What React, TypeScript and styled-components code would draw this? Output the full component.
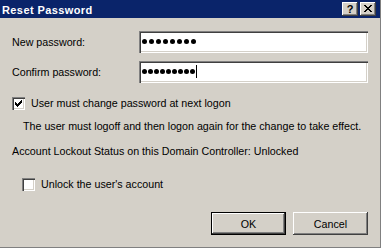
import React from "react";
import styled, { createGlobalStyle, css } from "styled-components";

const Global = createGlobalStyle`
  html, body { margin: 0; padding: 0; background: #d4d0c8; }
  body { font-family: "Liberation Sans", Arial, sans-serif; font-size: 10.7px; color: #000; }
  * { box-sizing: border-box; }
`;

const Window = styled.div`
  width: 381px;
  height: 248px;
  background: #d4d0c8;
  border-right: 1px solid #808080;
  border-bottom: 1px solid #808080;
  display: flex;
  flex-direction: column;
`;

const TitleBar = styled.div`
  height: 18px;
  background: #0a246a;
  display: flex;
  align-items: center;
  justify-content: space-between;
  padding: 0 4px 0 2px;
`;

const TitleText = styled.div`
  color: #fff;
  font-weight: bold;
  font-size: 11px;
  letter-spacing: 0.4px;
  line-height: 18px;
  padding-top: 1px;
`;

const TitleButtons = styled.div`
  display: flex;
  gap: 2px;
`;

const raised = css`
  background: #d4d0c8;
  box-shadow: inset -1px -1px 0 #404040, inset 1px 1px 0 #fff, inset -2px -2px 0 #808080;
`;

const CapButton = styled.div`
  ${raised};
  width: 16px;
  height: 14px;
  display: flex;
  align-items: center;
  justify-content: center;
  font-weight: bold;
  font-size: 11px;
  line-height: 14px;
  padding-bottom: 1px;
`;

const Body = styled.div`
  flex: 1;
  display: flex;
  flex-direction: column;
  padding: 0 12px 0 12px;
`;

const FieldRow = styled.div<{ $top: number }>`
  display: flex;
  align-items: center;
  height: 22px;
  margin-top: ${(p) => p.$top}px;
`;

const Label = styled.div`
  width: 127px;
`;

const PasswordBox = styled.div`
  width: 229px;
  height: 22px;
  background: #fff;
  box-shadow: inset 1px 1px 0 #808080, inset 2px 2px 0 #404040, inset -1px -1px 0 #fff, inset -2px -2px 0 #d4d0c8;
  display: flex;
  align-items: center;
  padding: 0 3px 1px 3px;
`;

const Dots = styled.div<{ $gap: number }>`
  display: flex;
  gap: ${(p) => p.$gap}px;
  align-items: center;
`;

const Dot = styled.span`
  width: 5px;
  height: 5px;
  border-radius: 50%;
  background: #000;
`;

const Caret = styled.span`
  width: 1px;
  height: 13px;
  background: #000;
  margin-left: 1px;
`;

const Line = styled.div<{ $top: number; $indent?: number }>`
  display: flex;
  align-items: center;
  height: 16px;
  line-height: 16px;
  margin-top: ${(p) => p.$top}px;
  padding-left: ${(p) => p.$indent ?? 0}px;
  white-space: nowrap;
`;

const CheckBox = styled.span`
  width: 13px;
  height: 13px;
  background: #fff;
  box-shadow: inset 1px 1px 0 #808080, inset 2px 2px 0 #404040, inset -1px -1px 0 #fff, inset -2px -2px 0 #d4d0c8;
  display: flex;
  align-items: center;
  justify-content: center;
  margin-right: 6px;
  flex-shrink: 0;
`;

const ButtonRow = styled.div`
  display: flex;
  justify-content: flex-end;
  gap: 7px;
  margin-top: 20px;
`;

const PushButton = styled.div<{ $default?: boolean }>`
  width: 75px;
  height: 23px;
  display: flex;
  align-items: center;
  justify-content: center;
  background: #d4d0c8;
  box-shadow: inset -1px -1px 0 #404040, inset 1px 1px 0 #fff, inset -2px -2px 0 #808080;
  ${(p) =>
    p.$default &&
    css`
      border: 1px solid #000;
    `}
`;

const checkPixels = [
  "......X",
  ".....XX",
  "X...XXX",
  "XX.XXX.",
  "XXXXX..",
  ".XXX...",
  "..X....",
];

const PixelGlyph = ({ rows }: { rows: string[] }) => (
  <svg width={rows[0].length} height={rows.length} viewBox={`0 0 ${rows[0].length} ${rows.length}`} shapeRendering="crispEdges">
    {rows.flatMap((row, y) =>
      row.split("").map((c, x) => (c === "X" ? <rect key={`${x}-${y}`} x={x} y={y} width="1" height="1" fill="#000" /> : null))
    )}
  </svg>
);

const closePixels = [
  "XX....XX",
  ".XX..XX.",
  "..XXXX..",
  "...XX...",
  "..XXXX..",
  ".XX..XX.",
  "XX....XX",
];

const DotList = ({ count, gap }: { count: number; gap: number }) => (
  <Dots $gap={gap}>
    {Array.from({ length: count }).map((_, i) => (
      <Dot key={i} />
    ))}
  </Dots>
);

export default function App() {
  return (
    <>
      <Global />
      <Window>
        <TitleBar>
          <TitleText>Reset Password</TitleText>
          <TitleButtons>
            <CapButton>?</CapButton>
            <CapButton>
              <PixelGlyph rows={closePixels} />
            </CapButton>
          </TitleButtons>
        </TitleBar>
        <Body>
          <FieldRow $top={13}>
            <Label>New password:</Label>
            <PasswordBox>
              <DotList count={8} gap={2} />
            </PasswordBox>
          </FieldRow>
          <FieldRow $top={8}>
            <Label>Confirm password:</Label>
            <PasswordBox>
              <DotList count={9} gap={1} />
              <Caret />
            </PasswordBox>
          </FieldRow>
          <Line $top={12}>
            <CheckBox>
              <PixelGlyph rows={checkPixels} />
            </CheckBox>
            User must change password at next logon
          </Line>
          <Line $top={7} $indent={11}>
            The user must logoff and then logon again for the change to take effect.
          </Line>
          <Line $top={9}>Account Lockout Status on this Domain Controller: Unlocked</Line>
          <Line $top={17} $indent={10}>
            <CheckBox />
            Unlock the user's account
          </Line>
          <ButtonRow>
            <PushButton $default>OK</PushButton>
            <PushButton>Cancel</PushButton>
          </ButtonRow>
        </Body>
      </Window>
    </>
  );
}
